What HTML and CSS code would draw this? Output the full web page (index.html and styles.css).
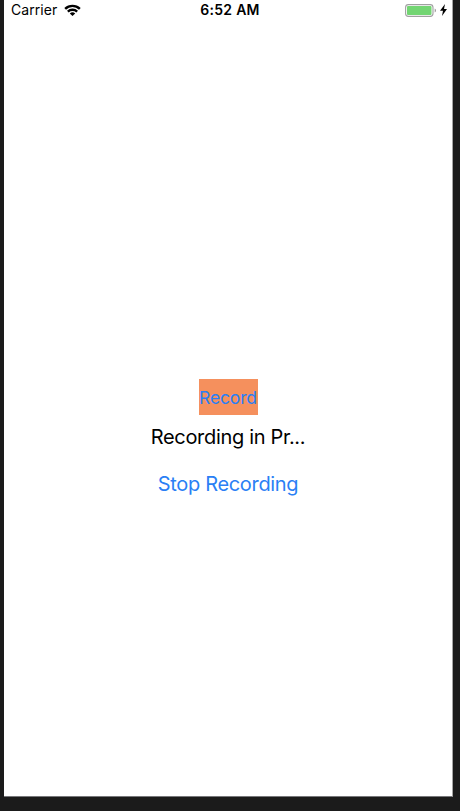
FILE: index.html
```html
<!DOCTYPE html>
<html lang="en">
<head>
<meta charset="utf-8">
<title>Recorder</title>
<link rel="stylesheet" href="styles.css">
</head>
<body>
<div class="screen">
  <header class="status">
    <div class="left">
      <span class="carrier">Carrier</span>
      <svg class="wifi" width="17" height="12" viewBox="0 0 17 12"><path d="M0.3 4 A12 12 0 0 1 16.7 4 L15 5.7 A9.4 9.4 0 0 0 2 5.7Z M3 6.8 A8 8 0 0 1 14 6.8 L12.3 8.4 A5.6 5.6 0 0 0 4.7 8.4Z M5.8 9.5 A4.2 4.2 0 0 1 11.2 9.5 L8.5 12Z"/></svg>
    </div>
    <span class="time">6:52 AM</span>
    <div class="right">
      <svg class="battery" width="32" height="13" viewBox="0 0 32 13"><rect x=".6" y=".6" width="27.4" height="11.8" rx="2.8" fill="none" stroke="#a0a0a0" stroke-width="1.1"/><rect x="2" y="2" width="24.5" height="9" rx="1" fill="#72d572"/><path d="M29.7 4.5a2.2 2.2 0 0 1 0 4Z" fill="#999"/></svg>
      <svg class="bolt" width="7" height="12" viewBox="0 0 7 12"><path d="M5 0 0 6.7h3L2 12l5-7H4Z"/></svg>
    </div>
  </header>
  <main class="controls">
    <button class="record">Record</button>
    <div class="label">Recording in Pr...</div>
    <button class="stop">Stop Recording</button>
  </main>
</div>
</body>
</html>
```

FILE: styles.css
```css
body { margin: 0; background: #1b1b1b; font-family: Inter, sans-serif; }
.screen { box-sizing: border-box; width: 449px; height: 797px; margin-left: 4px; background: #fff; border-right: 1px solid #a5a5a5; border-bottom: 1px solid #77777a; }
.status { display: grid; grid-template-columns: 1fr auto 1fr; align-items: center; height: 20px; padding: 0 5px 0 7px; font-size: 14px; line-height: 20px; }
.left, .right { display: flex; align-items: center; }
.left { gap: 7px; }
.right { justify-content: flex-end; gap: 3px; }
.carrier { letter-spacing: .05px; }
.time { padding-left: 2px; font-weight: 600; letter-spacing: .3px; }
.controls { display: flex; flex-direction: column; align-items: center; padding-top: 359px; }
button { padding: 0; border: 0; background: none; font-family: inherit; color: #2a7ff5; }
.record { width: 59px; height: 36px; background: #f5905d; font-size: 17.5px; letter-spacing: -.15px; }
.label { margin-top: 9px; font-size: 20px; line-height: 26px; letter-spacing: -.32px; }
.stop { margin-top: 21px; font-size: 20px; line-height: 26px; letter-spacing: -.32px; }
```
